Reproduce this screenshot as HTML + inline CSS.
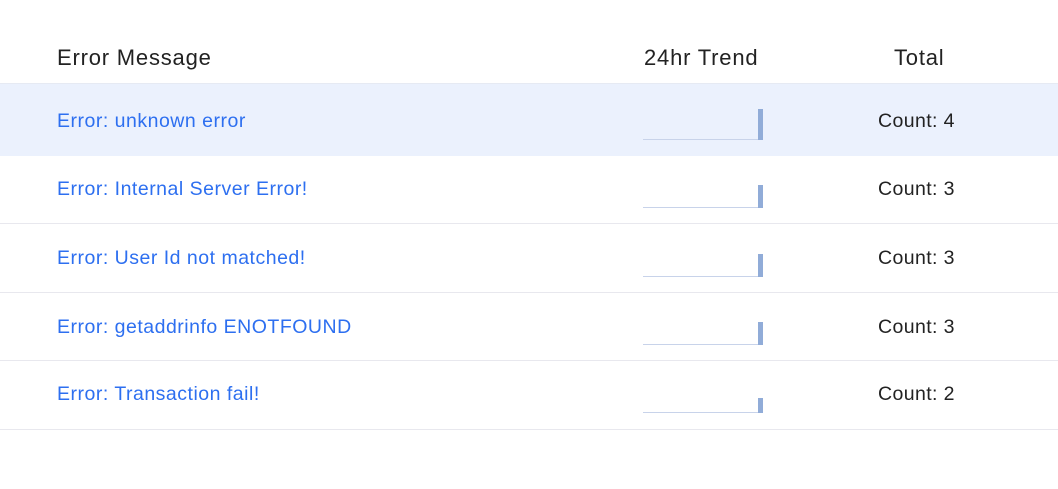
<!DOCTYPE html>
<html><head><style>
body{margin:0;width:1058px;height:489px;background:#fff;font-family:"Liberation Sans",Roboto,sans-serif;position:relative;overflow:hidden}
.h{position:absolute;top:44px;font-size:22px;color:#222;line-height:28px;letter-spacing:0.8px}
.row{position:absolute;left:0;width:1058px;border-bottom:1px solid #e8e8ee}
.msg{position:absolute;left:57px;font-size:19.5px;color:#2d6ff0;letter-spacing:0.5px}
.cnt{position:absolute;left:878px;font-size:19.5px;color:#222;letter-spacing:0.4px}
.base{position:absolute;left:643px;width:120px;height:1px;background:#c8d3ea}
.bar{position:absolute;left:758px;width:5px;background:#91acd8}
</style></head><body>
<div class="h" style="left:57px">Error Message</div>
<div class="h" style="left:644px">24hr Trend</div>
<div class="h" style="left:894px">Total</div>
<div class="row" style="top:83px;height:72px;background:#ebf1fd;border-bottom:none;border-top:1px solid #e6eaf3">
<div class="msg" style="top:26px">Error: unknown error</div>
<div class="base" style="top:55px"></div><div class="bar" style="top:25px;height:31px"></div>
<div class="cnt" style="top:26px">Count: 4</div></div>
<div class="row" style="top:155px;height:68px">
<div class="msg" style="top:23px">Error: Internal Server Error!</div>
<div class="base" style="top:52px"></div><div class="bar" style="top:30px;height:23px"></div>
<div class="cnt" style="top:23px">Count: 3</div></div>
<div class="row" style="top:224px;height:68px">
<div class="msg" style="top:23px">Error: User Id not matched!</div>
<div class="base" style="top:52px"></div><div class="bar" style="top:30px;height:23px"></div>
<div class="cnt" style="top:23px">Count: 3</div></div>
<div class="row" style="top:293px;height:67px">
<div class="msg" style="top:23px">Error: getaddrinfo ENOTFOUND</div>
<div class="base" style="top:51px"></div><div class="bar" style="top:29px;height:23px"></div>
<div class="cnt" style="top:23px">Count: 3</div></div>
<div class="row" style="top:361px;height:68px">
<div class="msg" style="top:22px">Error: Transaction fail!</div>
<div class="base" style="top:51px"></div><div class="bar" style="top:37px;height:15px"></div>
<div class="cnt" style="top:22px">Count: 2</div></div>
</body></html>
